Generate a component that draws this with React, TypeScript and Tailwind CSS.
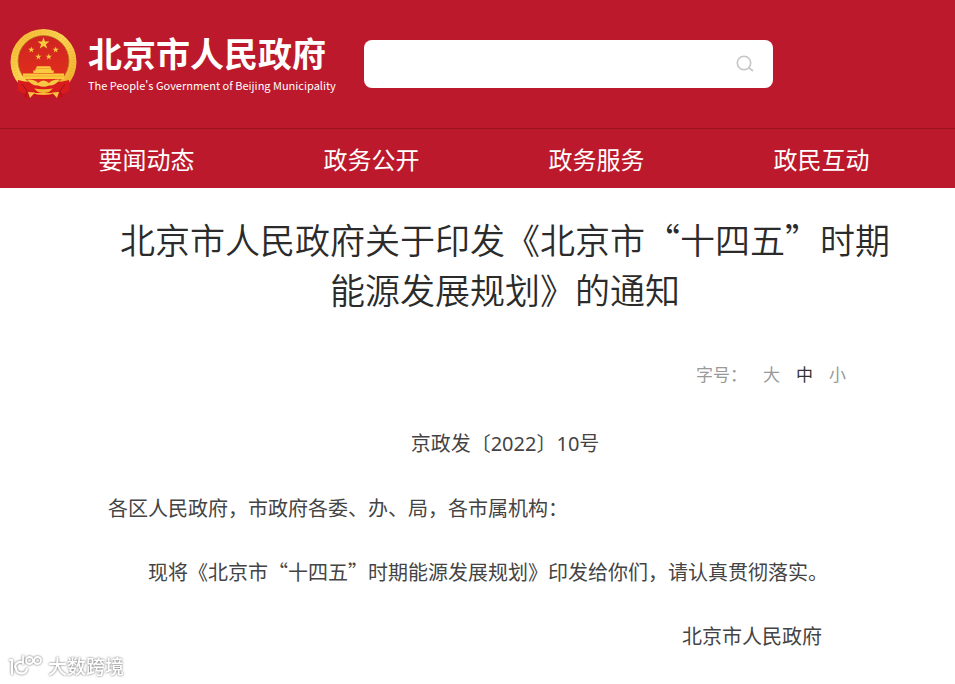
import { useState } from "react";

const navItems = ["要闻动态", "政务公开", "政务服务", "政民互动"];
const sizes = ["大", "中", "小"];

function star(cx: number, cy: number, r: number) {
  const pts: string[] = [];
  for (let i = 0; i < 10; i++) {
    const a = (Math.PI / 5) * i - Math.PI / 2;
    const q = i % 2 ? r * 0.4 : r;
    pts.push(`${(cx + q * Math.cos(a)).toFixed(2)},${(cy + q * Math.sin(a)).toFixed(2)}`);
  }
  return pts.join(" ");
}

function Emblem() {
  return (
    <svg viewBox="0 0 67 71" className="h-[71px] w-[67px] shrink-0" aria-hidden="true">
      <defs>
        <linearGradient id="gold" x1="0" y1="0" x2="1" y2="1">
          <stop offset="0" stopColor="#f3b52c" />
          <stop offset=".45" stopColor="#fbd654" />
          <stop offset="1" stopColor="#eda522" />
        </linearGradient>
        <linearGradient id="field" x1="0" y1="0" x2="0" y2="1">
          <stop offset="0" stopColor="#cf2420" />
          <stop offset="1" stopColor="#e2301c" />
        </linearGradient>
      </defs>
      <path d="M9 50 L8 62 L13 65 L17 70 L24 67 L33 69 L43 67 L50 70 L54 65 L59 62 L58 50 Z" fill="#c9131c" />
      <circle cx="33.5" cy="33" r="33" fill="url(#gold)" />
      <circle cx="33.5" cy="33" r="29.5" fill="none" stroke="#e59a20" strokeWidth="3.5" strokeDasharray="1 2" opacity=".35" />
      <circle cx="33.5" cy="32" r="25.5" fill="url(#field)" stroke="#b97a1c" strokeWidth=".8" />
      <g fill="#fbc93f">
        <polygon points={star(33.5, 14.5, 6.3)} />
        <polygon points={star(21.3, 20.8, 3.2)} />
        <polygon points={star(45.7, 20.8, 3.2)} />
        <polygon points={star(28.4, 27.8, 3.2)} />
        <polygon points={star(38.8, 27.8, 3.2)} />
        <path d="M27 37.3h13l1.5 2.4h-16z" />
        <path d="M25.5 40h16v1.400h2.200v2.600H23.3v-2.600h2.200z" />
        <path d="M13 44.600h41v5.400H13z" />
      </g>
      <path d="M13 47h41" stroke="#e59a20" strokeWidth=".6" />
      <path d="M8 51 Q14 53 22 53 L28 59 L22 64 Q13 66 8 62 Z M59 51 Q53 53 45 53 L39 59 L45 64 Q54 66 59 62 Z" fill="#d81c1d" />
      <path d="M22 55h23v9H22z" fill="#d81c1d" />
      <path d="M12 55 L17 62 L15 68 M55 55 L50 62 L52 68" fill="none" stroke="#a50f18" strokeWidth="1" />
      <path d="M17 50.500 Q25 50 28 54 Q33.500 49 39 54 Q42 50 50 50.500 Q45 57 39 56.500 Q33.500 59 28 56.500 Q22 57 17 50.500Z" fill="#f8c743" />
      <path d="M24 59.500 Q33.500 61 43 59.500 L39 63 Q33.500 65 28 63Z" fill="#f4b52f" />
      <path d="M18 63 L25 63.500 L20 69Z M49 63 L42 63.500 L47 69Z" fill="#f6c445" />
    </svg>
  );
}

function Watermark() {
  return (
    <div className="absolute bottom-1 left-2 flex items-center gap-1 drop-shadow-[0_0_1px_rgba(0,0,0,0.6)]">
      <svg viewBox="0 0 36 24" className="h-6 w-9" fill="none" stroke="#fff" strokeWidth="2.2" strokeLinecap="round" aria-hidden="true">
        <path d="M2 6h2v14M14 8C8 7 6 12 8 15M8 14c0 6 9 8 11 1" />
        <path d="M15 2v8M21.500 3a3.500 3.500 0 1 0 .1 7a3.500 3.500 0 1 0-.1-7M29.500 3a3.500 3.500 0 1 0 .1 7a3.500 3.500 0 1 0-.1-7" strokeWidth="1.8" />
      </svg>
      <span className="text-[19px] leading-7 font-medium text-white">大数跨境</span>
    </div>
  );
}

export default function App() {
  const [size, setSize] = useState("中");
  return (
    <div
      lang="zh-CN"
      className="relative min-h-screen bg-white pb-4 font-['Noto_Sans_CJK_SC',sans-serif] text-[#444]"
    >
      <header className="bg-[#bc1a2c] text-white">
        <div className="flex h-32 items-center gap-7 pr-8 pl-[10px]">
          <a href="#" className="flex items-center gap-[11px]">
            <Emblem />
            <span className="block pb-2 whitespace-nowrap">
              <span className="block text-[34px] leading-[49px] font-bold">北京市人民政府</span>
              <span className="block text-[11px] leading-4">The People's Government of Beijing Municipality</span>
            </span>
          </a>
          <form
            role="search"
            onSubmit={(e) => e.preventDefault()}
            className="flex h-12 max-w-[409px] flex-1 items-center rounded-lg bg-white"
          >
            <input aria-label="搜索" type="search" className="h-full min-w-0 flex-1 bg-transparent px-4 text-lg text-[#333] outline-none" />
            <button type="submit" aria-label="搜索" className="flex h-full w-14 items-center justify-center">
              <svg viewBox="0 0 18 18" className="size-[18px]" fill="none" stroke="#c6c6c6" strokeWidth="1.6" aria-hidden="true">
                <circle cx="8" cy="8" r="6.700" />
                <path d="M12.500 12.500 L17 16" />
              </svg>
            </button>
          </form>
        </div>
        <nav className="grid grid-cols-4 border-t border-[#98121f] pr-[21px] pl-[34px]">
          {navItems.map((n) => (
            <a key={n} href="#" className="text-center text-2xl leading-[59px]">
              {n}
            </a>
          ))}
        </nav>
      </header>

      <main className="pt-[26px] pr-[53px] pl-[108px]">
        <h1 className="text-center text-[35px] leading-[50px] font-[350] text-[#2b2b2b]">
          北京市人民政府关于印发《北京市“十四五”时期能源发展规划》的通知
        </h1>
        <div className="mt-12 flex justify-end gap-4 pr-14 text-[17px] leading-6 text-[#999]">
          <span>字号：</span>
          {sizes.map((s) => (
            <button
              key={s}
              type="button"
              aria-pressed={s === size}
              onClick={() => setSize(s)}
              className={s === size ? "text-[#333]" : "text-[#999]"}
            >
              {s}
            </button>
          ))}
        </div>
        <article className="mt-[25px] text-xl leading-[64px]">
          <p className="text-center">
            京政发〔<span className="font-['Noto_Sans',sans-serif]">2022</span>〕
            <span className="font-['Noto_Sans',sans-serif]">10</span>号
          </p>
          <p>各区人民政府，市政府各委、办、局，各市属机构：</p>
          <p className="indent-10">现将《北京市“十四五”时期能源发展规划》印发给你们，请认真贯彻落实。</p>
          <p className="pr-20 text-right">北京市人民政府</p>
        </article>
      </main>
      <Watermark />
    </div>
  );
}
